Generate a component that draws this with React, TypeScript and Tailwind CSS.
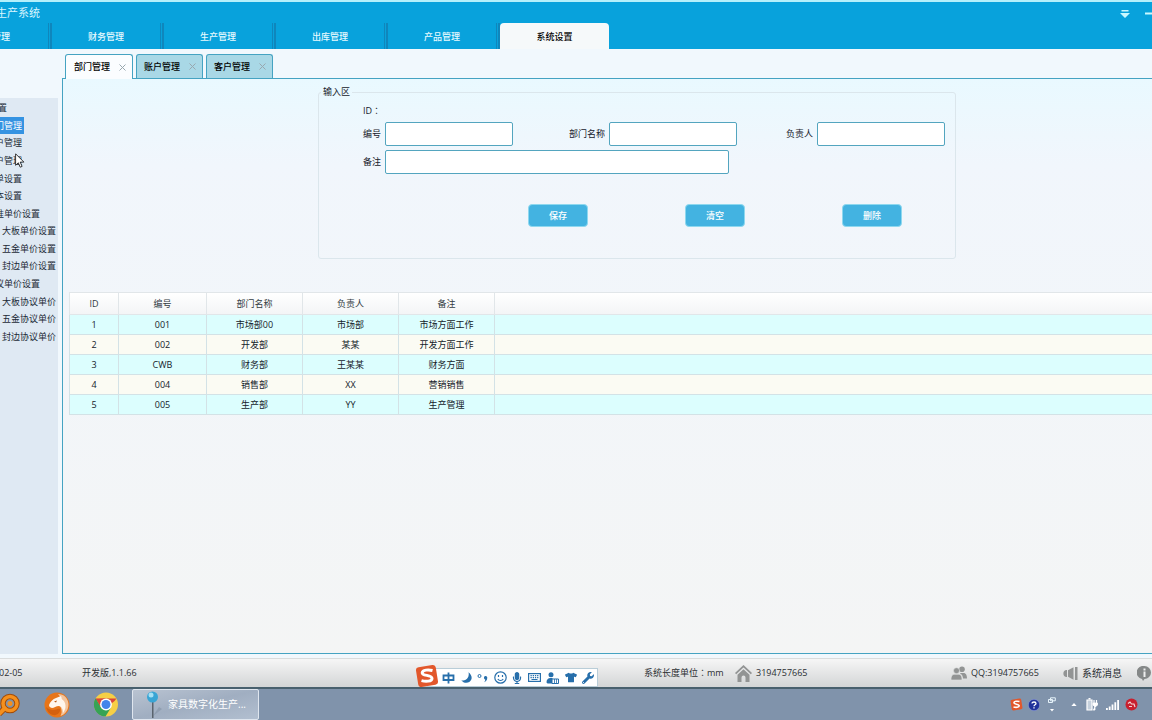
import { useState } from "react"
import { FaMicrophone, FaTshirt, FaWrench, FaMoon } from "react-icons/fa"

const navItems = ["管理", "财务管理", "生产管理", "出库管理", "产品管理", "系统设置"]
const tabs = ["部门管理", "账户管理", "客户管理"]

const treeItems = [
  { id: "root", label: "置", depth: 0 },
  { id: "dept", label: "门管理", depth: 1 },
  { id: "account", label: "户管理", depth: 1 },
  { id: "customer", label: "户管理", depth: 1 },
  { id: "menu", label: "单设置", depth: 1 },
  { id: "script", label: "本设置", depth: 1 },
  { id: "std", label: "准单价设置", depth: 1 },
  { id: "std-board", label: "大板单价设置", depth: 2 },
  { id: "std-metal", label: "五金单价设置", depth: 2 },
  { id: "std-edge", label: "封边单价设置", depth: 2 },
  { id: "deal", label: "议单价设置", depth: 1 },
  { id: "deal-board", label: "大板协议单价", depth: 2 },
  { id: "deal-metal", label: "五金协议单价", depth: 2 },
  { id: "deal-edge", label: "封边协议单价", depth: 2 },
]

const depthClass = ["-ml-[2px]", "-ml-[5px]", "ml-[2px]"]

const columns = ["ID", "编号", "部门名称", "负责人", "备注"]
const rows = [
  ["1", "001", "市场部00", "市场部", "市场方面工作"],
  ["2", "002", "开发部", "某某", "开发方面工作"],
  ["3", "CWB", "财务部", "王某某", "财务方面"],
  ["4", "004", "销售部", "XX", "营销销售"],
  ["5", "005", "生产部", "YY", "生产管理"],
]

// full-width colon, centred in its cell
function Colon() {
  return <span className="font-['Noto_Sans_CJK_TC',sans-serif]" lang="zh-TW">：</span>
}

function Header() {
  const [active, setActive] = useState("系统设置")

  return (
    <header className="flex h-[49px] shrink-0 flex-col border-t-2 border-[#b4f0fb] bg-[#08a2dc]">
      <div className="flex h-[21px] items-center justify-between">
        <h1 className="-ml-[4px] pt-[2px] text-[11px] text-[#d8f6ff]">生产系统</h1>
        <div className="-mr-[5px] flex items-center gap-[15px] pt-[2px] text-[#c9f8ff]">
          <button type="button" aria-label="菜单">
            <svg className="h-[9px] w-[10px]" viewBox="0 0 10 9" fill="currentColor">
              <path d="M1.500 1h7v1.500h-7zM0 4h10L5 9z" />
            </svg>
          </button>
          <button type="button" aria-label="最小化">
            <svg className="h-[9px] w-[12px]" viewBox="0 0 12 9" fill="currentColor">
              <path d="M0 3.500h12v2H0z" />
            </svg>
          </button>
        </div>
      </div>
      <nav className="-ml-[60px] flex flex-1">
        {navItems.map((item) => (
          <div
            key={item}
            className="flex w-[112px] shrink-0 border-r-2 border-[#0f86bc] pr-px first:pl-[14px] last:w-[109px] last:border-r-0 last:pr-0"
          >
            <button
              type="button"
              onClick={() => setActive(item)}
              className={
                item === active
                  ? "flex-1 rounded-t-[4px] bg-[#f6f9fa] pt-[2px] text-[9px] font-medium text-black"
                  : "flex-1 border-r border-[#0f86bc] pt-[2px] text-[9px] font-medium text-[#e6faff]"
              }
            >
              {item}
            </button>
          </div>
        ))}
      </nav>
    </header>
  )
}

function Sidebar() {
  const [selected, setSelected] = useState("dept")

  return (
    <aside className="mt-[49px] w-[58px] shrink-0 overflow-hidden bg-[#dfe9f3]">
      <ul className="flex h-[247px] flex-col pt-px">
        {treeItems.map((item) => (
          <li key={item.id} className="flex flex-1">
            <button
              type="button"
              onClick={() => setSelected(item.id)}
              className={
                item.id === selected
                  ? "flex items-center bg-[#3593e2] pr-[2px] text-white"
                  : "flex items-center text-[#1c2a36]"
              }
            >
              <span className={`whitespace-nowrap text-[9px] leading-none ${depthClass[item.depth]}`}>{item.label}</span>
            </button>
          </li>
        ))}
      </ul>
    </aside>
  )
}

function Field({ id, label, wide }: { id: string; label: string; wide?: boolean }) {
  return (
    <div className="flex items-center gap-[4px]">
      <label htmlFor={id} className="text-[9px]">
        {label}
      </label>
      <input
        id={id}
        type="text"
        className={`h-[24px] rounded-[2px] border border-[#53a5bf] bg-white px-1 text-[9px] outline-none ${wide ? "w-[344px]" : "w-[128px]"}`}
      />
    </div>
  )
}

function DepartmentForm() {
  return (
    <form onSubmit={(e) => e.preventDefault()} className="mt-[6px] ml-[255px] w-[638px]">
      <fieldset className="h-[174px] rounded-[3px] border border-[#dbe6ec] text-[9px] text-[#16202a]">
        <legend className="ml-[2px] px-[2px] leading-[14px]">输入区</legend>
        <div className="pl-[44px]">
          <p className="mt-[6px] h-[12px] leading-[12px]">
            ID
            <Colon />
          </p>
          <div className="mt-[5px] flex">
            <Field id="code" label="编号" />
            <div className="ml-[56px]">
              <Field id="name" label="部门名称" />
            </div>
            <div className="ml-[49px]">
              <Field id="owner" label="负责人" />
            </div>
          </div>
          <div className="mt-[4px]">
            <Field id="remark" label="备注" wide />
          </div>
        </div>
        <div className="mt-[30px] flex gap-[97px] pl-[209px]">
          {["保存", "清空", "删除"].map((text) => (
            <button
              key={text}
              type="button"
              className="h-[23px] w-[60px] rounded-[4px] border border-[#8ed8ef] bg-[#43b3e1] text-[9px] font-medium text-white"
            >
              {text}
            </button>
          ))}
        </div>
      </fieldset>
    </form>
  )
}

function DepartmentTable() {
  return (
    <div className="mt-[33px] pl-[6px]">
      <table className="w-full table-fixed border-collapse text-center text-[9px]">
        <colgroup>
          <col className="w-[49px]" />
          <col className="w-[88px]" />
          <col className="w-[96px]" />
          <col className="w-[96px]" />
          <col className="w-[96px]" />
          <col />
        </colgroup>
        <thead>
          <tr className="h-[22px] bg-linear-to-b from-white to-[#f3f4f6] text-[#333b42]">
            {columns.map((c) => (
              <th key={c} className="border border-[#e1e6e9] p-0 font-normal leading-[12px]">
                {c}
              </th>
            ))}
            <td className="border-y border-[#e1e6e9]"></td>
          </tr>
        </thead>
        <tbody>
          {rows.map((row) => (
            <tr key={row[0]} className="h-[20px] odd:bg-[#dcfefe] even:bg-[#fbfbf3]">
              {row.map((cell, i) => (
                <td key={i} className="border border-[#d3e2e6] p-0 leading-[12px] text-[#14222a]">
                  {cell}
                </td>
              ))}
              <td className="border-y border-[#d3e2e6]"></td>
            </tr>
          ))}
        </tbody>
      </table>
    </div>
  )
}

function Workspace() {
  const [active, setActive] = useState("部门管理")

  return (
    <section className="ml-[4px] flex min-w-0 flex-1 flex-col">
      <div className="flex h-[29px] items-end gap-[3px] pt-[4px] pl-[3px]">
        {tabs.map((tab) => (
          <div
            key={tab}
            className={
              tab === active
                ? "relative z-10 -mb-px flex h-[25px] w-[68px] items-center justify-between rounded-t-[3px] border border-b-0 border-[#45a3c2] bg-[#fbfdff] pr-[6px] pl-[8px]"
                : "flex h-[24px] w-[67px] items-center justify-between rounded-t-[3px] border border-b-0 border-[#45a3c2] bg-[#a9d8e6] pr-[6px] pl-[7px]"
            }
          >
            <button type="button" onClick={() => setActive(tab)} className="text-[9px] font-medium text-black">
              {tab}
            </button>
            <button type="button" aria-label={`关闭${tab}`} className="text-[#98a7af]">
              <svg className="h-[7px] w-[7px]" viewBox="0 0 7 7" stroke="currentColor" strokeWidth="1">
                <path d="M.5.5l6 6M6.500.5l-6 6" />
              </svg>
            </button>
          </div>
        ))}
      </div>
      <div className="flex-1 border-y border-l border-[#45a3c2] bg-linear-to-b from-[#e9f9ff] via-[#f1f6fc] via-15% to-[#f4f5f5]">
        <div className="flow-root">
          <DepartmentForm />
          <DepartmentTable />
        </div>
      </div>
    </section>
  )
}

function SogouLogo({ className }: { className: string }) {
  return (
    <svg className={className} viewBox="0 0 24 24">
      <rect x="2" y="2" width="20" height="20" rx="3" fill="#e2572b" transform="rotate(-9 12 12)" />
      <path
        d="M17.500 6.500c-4-1-10-.8-10.300 2.300-.3 3.200 9.800 2 9.800 5.600 0 3.200-6.500 3.300-10.500 2.200"
        fill="none"
        stroke="#fff"
        strokeWidth="3"
      />
    </svg>
  )
}

function InputMethodBar() {
  return (
    <div className="absolute bottom-0 left-[415px] flex h-[22px] items-center">
      <SogouLogo className="z-10 -mr-[12px] h-[24px] w-[24px]" />
      <div className="mt-[3px] flex h-[19px] w-[171px] items-center justify-between border border-[#b9cdd8] bg-white pr-[3px] pl-[14px] text-[#276fab]">
        <svg className="h-[12px] w-[13px]" viewBox="0 0 13 12" fill="none" stroke="currentColor" strokeWidth="1.800">
          <path d="M1.500 3.500h10v4.500h-10zM6.500.5v11" />
        </svg>
        <svg className="h-[11px] w-[11px]" viewBox="0 0 11 11" fill="currentColor">
          <path d="M7.500.3C11.500 3.300 11.600 8 8.300 10 5.500 11.600 2 10.700.3 8.200c2.800.6 5-.2 6.300-2.200C7.800 4.200 8 2.200 7.500.3z" />
        </svg>
        <svg className="h-[10px] w-[11px]" viewBox="0 0 11 10">
          <circle cx="2.500" cy="3" r="1.500" fill="none" stroke="currentColor" />
          <path d="M7 4.200a1.700 1.700 0 013.300.3C10.300 7 9 8.500 7.200 9.300 8.200 8 8.300 7.300 8.200 6.600 7.400 6.400 6.900 5.500 7 4.200z" fill="currentColor" />
        </svg>
        <svg className="h-[13px] w-[13px]" viewBox="0 0 13 13" fill="none" stroke="currentColor" strokeWidth="1.200">
          <circle cx="6.500" cy="6.500" r="5.700" />
          <path d="M4.500 4v2M8.500 4v2M3.800 8c1.200 2 4.200 2 5.400 0" />
        </svg>
        <FaMicrophone className="h-[12px] w-[10px]" />
        <svg className="h-[9px] w-[13px]" viewBox="0 0 13 9" fill="none" stroke="currentColor">
          <rect x=".6" y=".6" width="11.800" height="7.800" strokeWidth="1.200" />
          <path d="M2.500 2.700h8M2.500 4.600h8" strokeDasharray="1.300 .9" strokeWidth="1.200" />
          <path d="M3.500 6.500h6" />
        </svg>
        <svg className="h-[12px] w-[13px]" viewBox="0 0 13 12" fill="currentColor">
          <circle cx="5" cy="2.700" r="2.500" />
          <path d="M.5 10.500C.5 7.500 2 6 4.500 6h2v5.500h-5z" />
          <path d="M6 7h6.500v4.500H6z" fill="#fff" stroke="currentColor" />
          <path d="M8 7h.8v4H8zM10 7h.8v4H10z" />
        </svg>
        <FaTshirt className="h-[11px] w-[12px]" />
        <FaWrench className="h-[12px] w-[12px]" />
      </div>
    </div>
  )
}

function StatusBar() {
  return (
    <footer className="relative grid h-[29px] shrink-0 grid-cols-[82px_1fr_91px_216px_112px_74px_15px] items-center overflow-hidden border-t border-[#dadcdc] bg-linear-to-b from-[#f6f6f6] to-[#d3d5d6] text-[9px] whitespace-nowrap text-[#2b2f33]">
      <span className="-ml-[1px]">02-05</span>
      <span>开发版,1.1.66</span>
      <span>
        系统长度单位
        <Colon />
        mm
      </span>
      <span className="flex items-center gap-[4px]">
        <svg className="h-[17px] w-[17px]" viewBox="0 0 17 17" fill="#929494">
          <path d="M8.500 0L17 8l-1.200 1.200-7.300-6.700-7.300 6.700L0 8z" />
          <path d="M8.500 4.300l6 5.500V17h-4v-4.500a2 2 0 00-4 0V17h-4V9.800z" />
        </svg>
        3194757665
      </span>
      <span className="flex items-center gap-[4px]">
        <svg className="h-[14px] w-[16px]" viewBox="0 0 16 14" fill="#929494">
          <circle cx="11" cy="3.300" r="2.800" />
          <path d="M9.500 7h3c2 0 3.500 1.500 3.500 5.500h-4C11.800 9.800 11 8.300 9 7.500z" />
          <circle cx="5.500" cy="4.700" r="3" stroke="#e4e5e5" strokeWidth=".6" />
          <path d="M0 14c0-4.500 1.500-5.700 4-5.700h3c2.600 0 4 1.200 4 5.700z" stroke="#e4e5e5" strokeWidth=".6" />
        </svg>
        QQ:3194757665
      </span>
      <span className="flex items-center gap-[4px] text-[10px]">
        <svg className="h-[13px] w-[15px]" viewBox="0 0 15 13" fill="#929494">
          <path d="M4 3v7H3C-.5 9.500-.5 3.500 3 3zM5 3.200L10.500.3v12.400L5 9.800zM12 0h2.500v13H12z" />
        </svg>
        系统消息
      </span>
      <svg className="h-[15px] w-[15px]" viewBox="0 0 15 15">
        <path d="M7.500 0a6.500 6.500 0 110 13L6 15 5 13A6.600 6.600 0 017.500 0z" fill="#858888" />
        <path d="M6.500 5.500h2V11h-2zM6.500 2.500h2v2h-2z" fill="#eee" />
      </svg>
      <InputMethodBar />
    </footer>
  )
}

function Taskbar() {
  return (
    <div className="flex h-[33px] shrink-0 items-center justify-between overflow-hidden border-t-2 border-[#48606e] bg-[#8093ab]">
      <div className="flex h-full items-center">
        <button type="button" aria-label="搜索">
          <svg className="h-[24px] w-[20px]" viewBox="0 0 20 24" fill="none">
            <path d="M6 14l-7 7" stroke="#a34c08" strokeWidth="6" />
            <circle cx="10" cy="10.500" r="7" stroke="#a34c08" strokeWidth="5.500" />
            <path d="M6 14l-7 7" stroke="#f5901e" strokeWidth="4" />
            <circle cx="10" cy="10.500" r="7" stroke="#f5901e" strokeWidth="3.500" />
            <circle cx="10" cy="10.500" r="2.500" fill="#f5901e" />
          </svg>
        </button>
        <button type="button" aria-label="浏览器" className="ml-[24px]">
          <svg className="h-[26px] w-[26px]" viewBox="0 0 26 26">
            <circle cx="13" cy="13" r="12.500" fill="#e87519" />
            <path d="M14 2c6 0 10 4 10.500 10 0 6-3 10-8 12 2-4 1-6 0-9l3-6z" fill="#f3c49c" />
            <path d="M5 13c1-3 4-6 7-7l5-2 1 3c4 3 5 9 1 14 0-4-1-6-4-7-3 0-5 2-7 2-2-.5-3-1.500-3-3z" fill="#fff6ec" />
            <path d="M2 15c2 2 5 3 7 3 3 0 5-2 7-1 1 3-3 7-7 6s-6-4-7-8z" fill="#d4600f" />
            <path d="M10 9.500l3-1-1 2z" fill="#b9530d" />
          </svg>
        </button>
        <button type="button" aria-label="Chrome" className="ml-[23px]">
          <svg className="h-[25px] w-[26px]" viewBox="0 0 24 24">
            <circle cx="12" cy="12" r="11.500" fill="#f6cf45" />
            <path d="M12 12L2 6.200A11.500 11.500 0 0022 6.300H12z" fill="#d9463a" />
            <path d="M2 6.200A11.500 11.500 0 0011.500 23.500L16.700 15 12 12l-5 2.500z" fill="#36a355" />
            <path d="M2 6.200L7.300 15 12 8.500V6z" fill="#d9463a" />
            <path d="M2 6.200L7 15l4 2-1 6.300A11.500 11.500 0 012 6.200z" fill="#36a355" />
            <circle cx="12" cy="12" r="5.700" fill="#fff" />
            <circle cx="12" cy="12" r="4.300" fill="#4384ea" />
          </svg>
        </button>
        <button
          type="button"
          className="ml-[13px] flex h-full w-[127px] items-center gap-[9px] rounded-[2px] border border-[#dfe6ef] bg-linear-to-br from-[#b9c3d1] via-[#a0aec1] to-[#b2bfd0] pl-[13px] text-[10px] text-white"
        >
          <svg className="h-[28px] w-[13px] shrink-0 overflow-visible" viewBox="0 0 13 28">
            <path d="M7 25L16 18l-3-2z" fill="#7e8da0" opacity=".5" />
            <path d="M6 9h1.500v18H6z" fill="#59636d" />
            <circle cx="6.500" cy="6" r="5.500" fill="#38a5d5" />
            <circle cx="5" cy="4" r="2.500" fill="#a5e0f4" />
          </svg>
          家具数字化生产...
        </button>
      </div>
      <div className="mr-[14px] flex items-center text-white">
        <SogouLogo className="h-[13px] w-[13px]" />
        <svg className="ml-[5px] h-[12px] w-[12px]" viewBox="0 0 12 12">
          <circle cx="6" cy="6" r="5.700" fill="#20319a" stroke="#8ea0dc" strokeWidth=".6" />
          <path d="M4 4.500C4 2.500 8 2.500 8 4.500 8 5.800 6 5.800 6 7.200M6 8.300v1.300" fill="none" stroke="#fff" strokeWidth="1.300" />
        </svg>
        <svg className="ml-[8px] h-[16px] w-[8px]" viewBox="0 0 8 16" fill="none" stroke="#e6f3fa">
          <path d="M2.500.8h4.800v3H2.500zM.5 2.500h4v3h-4z" />
          <path d="M2 12h4L4 14.500z" fill="#fff" stroke="none" />
        </svg>
        <svg className="ml-[15px] h-[3px] w-[6px]" viewBox="0 0 7 4" fill="currentColor">
          <path d="M3.500 0L7 4H0z" />
        </svg>
        <svg className="ml-[9px] h-[13px] w-[12px]" viewBox="0 0 12 13" stroke="currentColor">
          <path d="M1 2h5v10H1zM2.500.6h2" fill="#c5d0dc" strokeWidth="1.200" />
          <path d="M8 2v3M10.500 2v3" fill="none" strokeWidth="1.200" />
          <path d="M7 5h4.500v2L10 8.500H8.500L7 7zM9 8v4H7" strokeWidth=".8" fill="currentColor" />
        </svg>
        <svg className="ml-[8px] h-[10px] w-[13px]" viewBox="0 0 13 10" fill="currentColor">
          <path d="M0 8h1.800v2H0zM2.800 6.500h1.800V10H2.800zM5.600 4.500h1.800V10H5.600zM8.400 2.300h1.800V10H8.400zM11.200 0H13v10h-1.800z" />
        </svg>
        <svg className="ml-[6px] h-[13px] w-[13px]" viewBox="0 0 13 13">
          <circle cx="6.500" cy="6.500" r="6" fill="#c8202f" />
          <path d="M3 5.500l2-1.500 1.500 2H9l1 3M4 8.500h3" fill="none" stroke="#f5d4d4" strokeWidth="1.200" />
        </svg>
      </div>
    </div>
  )
}

export default function App() {
  return (
    <div className="relative flex h-screen flex-col overflow-hidden bg-[#f1f8fd] font-['Open_Sans','Noto_Sans_CJK_SC',sans-serif]">
      <Header />
      <main className="flex min-h-0 flex-1 pb-[4px]">
        <Sidebar />
        <Workspace />
      </main>
      <StatusBar />
      <Taskbar />
      {/* mouse pointer */}
      <svg className="pointer-events-none absolute top-[153px] left-[15px] h-[15px] w-[10px]" viewBox="0 0 10 15">
        <path d="M.6.800v11.500l2.700-2.500 1.900 4.400 1.900-.8-1.900-4.300h3.700z" fill="#fff" stroke="#222" strokeWidth=".9" />
      </svg>
    </div>
  )
}
